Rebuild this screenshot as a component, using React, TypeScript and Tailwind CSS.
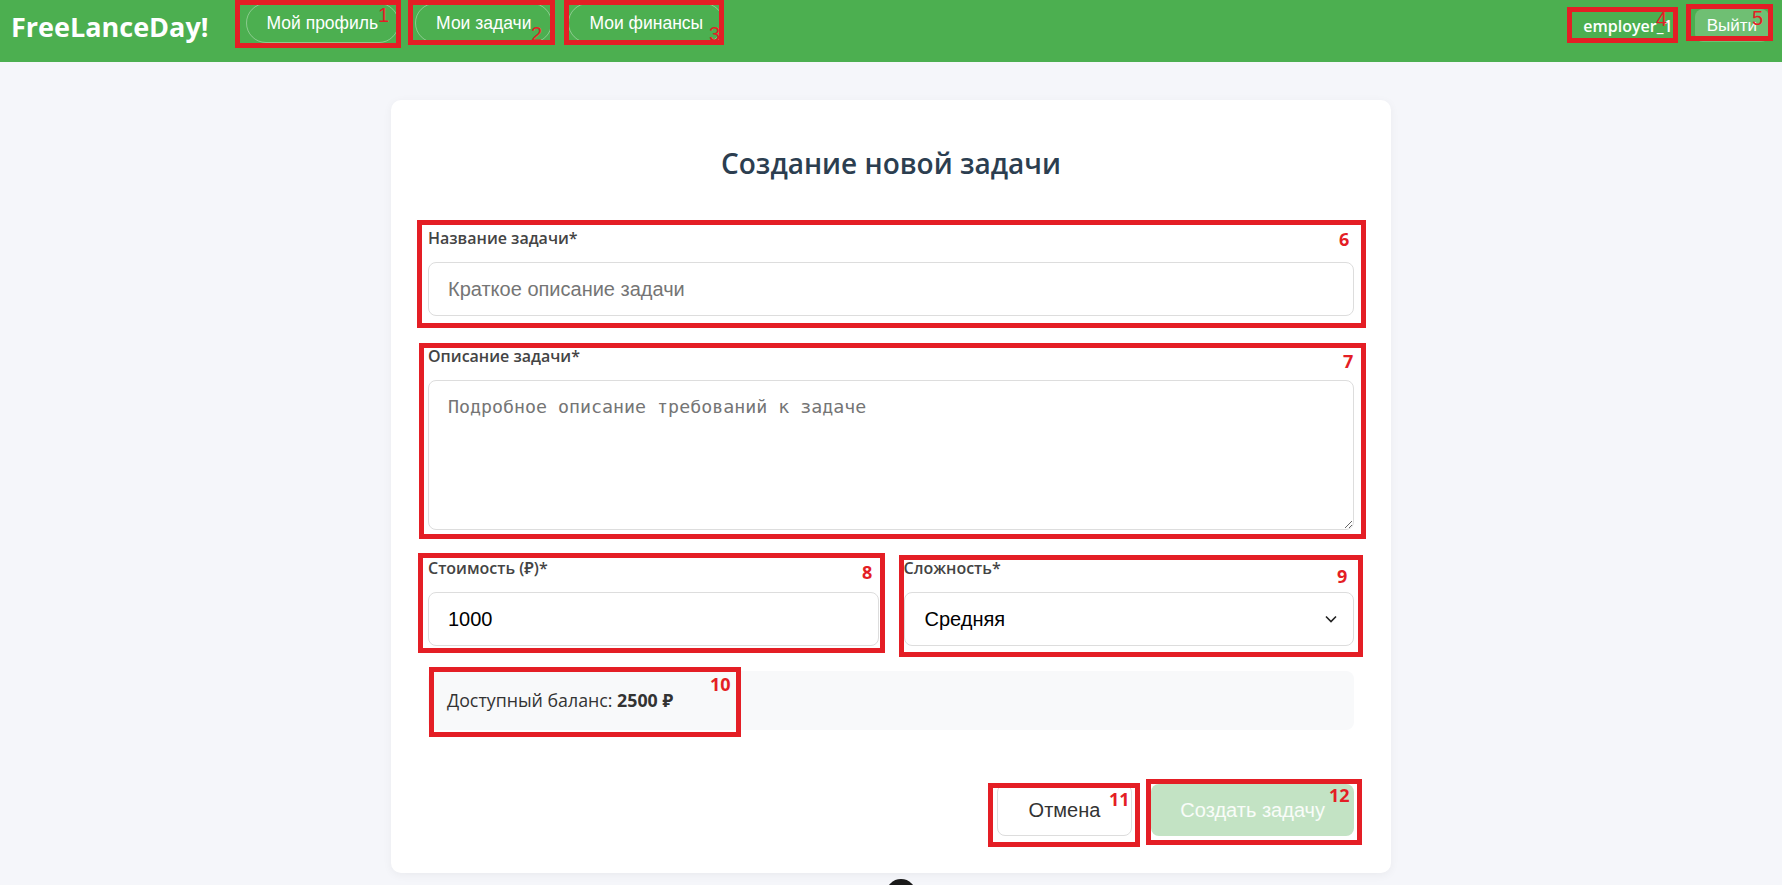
import React from 'react';

// annotation boxes drawn over the screenshot
const marks = [
  { n: '1', box: 'left-[235px] top-[0px] w-[166px] h-[48px]', num: 'left-[378px] top-[5px]', nav: true },
  { n: '2', box: 'left-[408px] top-[0px] w-[147px] h-[45px]', num: 'left-[531px] top-[24px]', nav: true },
  { n: '3', box: 'left-[564px] top-[0px] w-[160px] h-[45px]', num: 'left-[709px] top-[24px]', nav: true },
  { n: '4', box: 'left-[1567px] top-[7px] w-[111px] h-[36px]', num: 'left-[1656px] top-[9px]', nav: true },
  { n: '5', box: 'left-[1686px] top-[4px] w-[87px] h-[37px]', num: 'left-[1752px] top-[8px]', nav: true },
  { n: '6', box: 'left-[417px] top-[220px] w-[949px] h-[108px]', num: 'left-[1339px] top-[230px]' },
  { n: '7', box: 'left-[419px] top-[343px] w-[947px] h-[196px]', num: 'left-[1343px] top-[352px]' },
  { n: '8', box: 'left-[418px] top-[553px] w-[467px] h-[100px]', num: 'left-[862px] top-[563px]' },
  { n: '9', box: 'left-[899px] top-[555px] w-[464px] h-[102px]', num: 'left-[1337px] top-[567px]' },
  { n: '10', box: 'left-[429px] top-[667px] w-[312px] h-[70px]', num: 'left-[710px] top-[675px]' },
  { n: '11', box: 'left-[988px] top-[783px] w-[152px] h-[64px]', num: 'left-[1109px] top-[790px]' },
  { n: '12', box: 'left-[1146px] top-[779px] w-[216px] h-[66px]', num: 'left-[1329px] top-[786px]' },
];

function Marks() {
  return (
    <>
      {marks.map((m) => (
        <React.Fragment key={m.n}>
          <div className={'pointer-events-none absolute z-10 box-border border-[5px] border-[#e41e25] ' + m.box} />
          <div
            className={
              'pointer-events-none absolute z-20 leading-none text-[#e41e25] ' +
              m.num +
              (m.nav
                ? " font-['Liberation_Sans',Arial,sans-serif] text-[20px]"
                : " font-['Open_Sans','Noto_Sans',sans-serif] text-[18px] font-bold")
            }
          >
            {m.n}
          </div>
        </React.Fragment>
      ))}
    </>
  );
}

function Header() {
  return (
    <header className="flex h-[62px] items-start bg-[#4caf50] pl-[11px] pr-[13px] text-white">
      <div className="mt-[9px] font-['Open_Sans','Noto_Sans',sans-serif] text-[27px] font-bold leading-[36px]">
        FreeLanceDay!
      </div>
      <nav className="ml-[37px] mt-[3px] flex gap-[16px]">
        {['Мой профиль', 'Мои задачи', 'Мои финансы'].map((t) => (
          <button
            key={t}
            className="h-[40px] rounded-full border border-white/35 px-5 font-['Liberation_Sans',Arial,sans-serif] text-[17.5px] text-white"
          >
            {t}
          </button>
        ))}
      </nav>
      <div className="ml-auto flex items-start gap-[22px]">
        <span className="mt-[15px] font-['Open_Sans','Noto_Sans',sans-serif] text-[16px] font-semibold leading-[22px]">
          employer_1
        </span>
        <button className="mt-[9px] h-[33px] rounded-lg bg-white/20 px-3 font-['Liberation_Sans',Arial,sans-serif] text-[17px] text-white">
          Выйти
        </button>
      </div>
    </header>
  );
}

function Label({ children }: { children: React.ReactNode }) {
  return (
    <label className="mb-[13px] block font-['Open_Sans','Noto_Sans',sans-serif] text-[16px] font-semibold leading-[22px] text-[#444]">
      {children}
    </label>
  );
}

const field =
  "block h-[54px] w-full rounded-lg border border-[#ddd] bg-white font-['Liberation_Sans',Arial,sans-serif] text-[20px] text-black outline-none placeholder:text-[#757575]";

function TaskForm() {
  return (
    <div className="mx-auto w-[1000px] rounded-[10px] bg-white px-[37px] pb-[37px] pt-[37px] shadow-[0_2px_10px_rgba(0,0,0,0.05)]">
      <h2 className="mb-[47px] mt-[9px] text-center font-['Open_Sans','Noto_Sans',sans-serif] text-[28px] font-semibold leading-[34px] text-[#2c3e50]">
        Создание новой задачи
      </h2>

      <div className="mb-[29px]">
        <Label>Название задачи*</Label>
        <input className={field + ' px-[19px]'} placeholder="Краткое описание задачи" />
      </div>

      <div className="mb-[27px]">
        <Label>Описание задачи*</Label>
        <textarea
          className="block h-[150px] w-full rounded-lg border border-[#ddd] bg-white px-[19px] pt-[12px] font-['DejaVu_Sans_Mono','Liberation_Mono',monospace] text-[18.3px] leading-[27px] text-black outline-none placeholder:text-[#757575]"
          placeholder="Подробное описание требований к задаче"
        />
      </div>

      <div className="mb-[25px] grid grid-cols-2 gap-[25px]">
        <div>
          <Label>Стоимость (₽)*</Label>
          <input className={field + ' px-[19px]'} defaultValue="1000" />
        </div>
        <div>
          <Label>Сложность*</Label>
          <div className="relative">
            <select className={field + ' appearance-none px-[20px]'} defaultValue="medium">
              <option value="easy">Легкая</option>
              <option value="medium">Средняя</option>
              <option value="hard">Сложная</option>
            </select>
            <svg
              className="pointer-events-none absolute right-[17px] top-1/2 -translate-y-1/2"
              width="12"
              height="8"
              viewBox="0 0 12 8"
              fill="none"
            >
              <path d="M1 1.5 L6 6.5 L11 1.5" stroke="#222" strokeWidth="1.6" />
            </svg>
          </div>
        </div>
      </div>

      <div className="rounded-lg bg-[#f8f9fa] px-[19px] py-[18px] font-['Open_Sans','Noto_Sans',sans-serif] text-[17.8px] leading-[23px] text-[#333]">
        Доступный баланс: <strong className="font-bold">2500 ₽</strong>
      </div>

      <div className="mt-[54px] flex justify-end gap-[19px]">
        <button className="h-[52px] rounded-lg border border-[#ddd] bg-white px-[31px] font-['Liberation_Sans',Arial,sans-serif] text-[20px] text-[#333]">
          Отмена
        </button>
        <button
          disabled
          className="h-[52px] rounded-lg bg-[#c3e3c4] px-[29px] font-['Liberation_Sans',Arial,sans-serif] text-[20px] text-white/90"
        >
          Создать задачу
        </button>
      </div>
    </div>
  );
}

export default function App() {
  return (
    <div className="relative h-[885px] overflow-hidden bg-[#f5f6fa]">
      <Header />
      <main className="pt-[38px]">
        <TaskForm />
      </main>
      <div className="absolute left-[886px] top-[879px] h-[30px] w-[30px] rounded-full bg-[#1a1a1a]" />
      <Marks />
    </div>
  );
}
